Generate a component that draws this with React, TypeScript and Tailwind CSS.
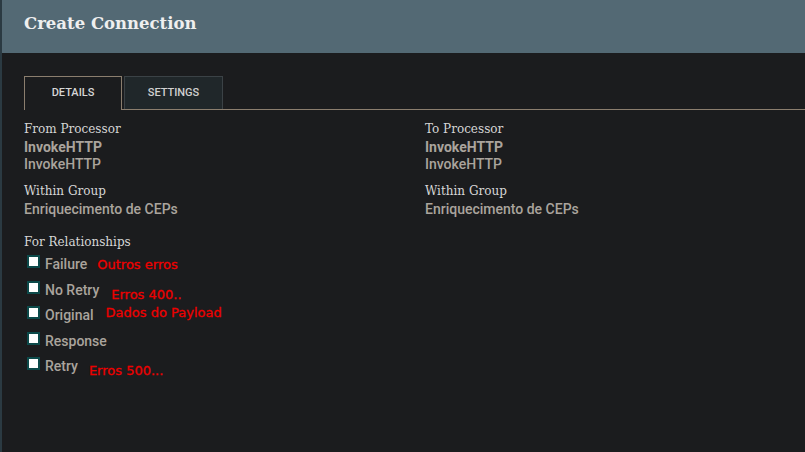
const slab = "font-['DejaVu_Serif',serif]";
const roboto = "font-['Roboto','Liberation_Sans',sans-serif]";

function Field({ label, values }: { label: string; values: { text: string; bold?: boolean }[] }) {
  return (
    <div className="mb-[9px]">
      <div className={`${slab} text-[12px] leading-[19px] text-[#d6d6d6]`}>{label}</div>
      {values.map((v, i) => (
        <div
          key={i}
          className={`${roboto} text-[14px] leading-[17px] text-[#aaa49d] ${v.bold ? 'font-bold' : 'font-medium'}`}
        >
          {v.text}
        </div>
      ))}
    </div>
  );
}

const relationships = [
  { name: 'Failure', note: 'Outros erros', ml: 'ml-[10px]', dy: 'translate-y-0' },
  { name: 'No Retry', note: 'Erros 400..', ml: 'ml-[12px]', dy: 'translate-y-[4px]' },
  { name: 'Original', note: 'Dados do Payload', ml: 'ml-[12px]', dy: '-translate-y-[3px]' },
  { name: 'Response', note: '', ml: '', dy: '' },
  { name: 'Retry', note: 'Erros 500...', ml: 'ml-[11px]', dy: 'translate-y-[4px]' },
];

export default function App() {
  return (
    <div className="w-[805px] h-[452px] bg-[#1b1c1e] border-l-2 border-[#2b3a42] overflow-hidden">
      <div className="h-[53px] bg-[#536974] pl-[22px] pt-[11px]">
        <h1 className={`${slab} text-[16.5px] font-bold text-[#efefef] leading-[26px]`}>Create Connection</h1>
      </div>

      <div className="pl-[22px] pt-[23px]">
        <div className="flex items-end border-b border-[#8b7e6e]">
          <div className={`${roboto} w-[98px] h-[34px] flex items-center justify-center border border-b-0 border-[#8b7e6e] bg-[#1b1c1e] text-[11px] font-medium text-[#d6d6d6] -mb-px pb-px`}>
            DETAILS
          </div>
          <div className={`${roboto} ml-[2px] w-[99px] h-[33px] flex items-center justify-center border border-b-0 border-[#3b4246] bg-[#20272a] text-[11px] font-medium text-[#d0d0d0]`}>
            SETTINGS
          </div>
        </div>

        <div className="grid grid-cols-[401px_1fr] pt-[10px]">
          <div>
            <Field label="From Processor" values={[{ text: 'InvokeHTTP', bold: true }, { text: 'InvokeHTTP' }]} />
            <Field label="Within Group" values={[{ text: 'Enriquecimento de CEPs' }]} />
          </div>
          <div>
            <Field label="To Processor" values={[{ text: 'InvokeHTTP', bold: true }, { text: 'InvokeHTTP' }]} />
            <Field label="Within Group" values={[{ text: 'Enriquecimento de CEPs' }]} />
          </div>
        </div>

        <div className={`${slab} text-[12px] leading-[19px] text-[#d6d6d6] mt-[6px]`}>For Relationships</div>
        <div className="flex flex-col">
          {relationships.map((r) => (
            <div key={r.name} className="flex items-center h-[25.5px] pl-[3px]">
              <span className="w-[13px] h-[13px] border-2 border-[#0c4a4a] bg-white -translate-y-[3px]" />
              <span className={`${roboto} ml-[5px] text-[14px] font-medium text-[#aaa49d]`}>{r.name}</span>
              {r.note && (
                <span className={`${r.ml} ${r.dy} font-['DejaVu_Sans',sans-serif] text-[13px] font-normal text-[#ee0000] [-webkit-text-stroke:0.3px_#ee0000]`}>
                  {r.note}
                </span>
              )}
            </div>
          ))}
        </div>
      </div>
    </div>
  );
}
